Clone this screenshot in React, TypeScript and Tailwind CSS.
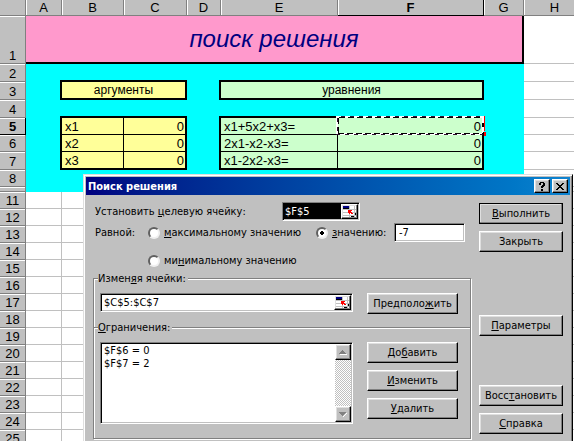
import type { ReactNode } from "react";

const uiFont = "font-['DejaVu_Sans_Condensed','DejaVu_Sans',sans-serif]";
const sheetFont = "font-['Liberation_Sans',Arial,sans-serif]";

const raised =
  "border border-t-white border-l-white border-r-black border-b-black bg-[#c0c0c0] shadow-[inset_-1px_-1px_0_#808080,inset_1px_1px_0_#dfdfdf]";
const sunken =
  "border border-t-[#808080] border-l-[#808080] border-r-white border-b-white bg-white shadow-[inset_1px_1px_0_#000,inset_-1px_-1px_0_#c0c0c0]";

const columns = [
  { name: "A", width: "w-[36px]" },
  { name: "B", width: "w-[62px]" },
  { name: "C", width: "w-[63px]" },
  { name: "D", width: "w-[34px]" },
  { name: "E", width: "w-[117px]" },
  { name: "F", width: "w-[146px]" },
  { name: "G", width: "w-[40px]" },
  { name: "H", width: "w-[62px]" },
];

const emptyRows = [11, 12, 13, 14, 15, 16, 17, 18, 19, 20, 21, 22, 23, 24, 25];

const data = [
  { row: 5, height: "h-[17px]", name: "x1", value: 0, equation: "x1+5x2+x3=", result: 0 },
  { row: 6, height: "h-[17px]", name: "x2", value: 0, equation: "2x1-x2-x3=", result: 0 },
  { row: 7, height: "h-[18px]", name: "x3", value: 0, equation: "x1-2x2-x3=", result: 0 },
];

const outlineCorner = "shadow-[-2px_-2px_0_#000,0_-2px_0_#000,-2px_0_0_#000]";
const outlineTop = "shadow-[0_-2px_0_#000]";
const outlineLeft = "shadow-[-2px_0_0_#000]";

function RowHeader({ children, active = false }: { children?: ReactNode; active?: boolean }) {
  return (
    <th
      scope="row"
      className={`border-r border-b bg-[#c0c0c0] p-0 text-center align-bottom shadow-[inset_0_1px_0_#fff] ${
        active ? "border-black font-bold" : "border-[#808080] font-normal"
      }`}
    >
      {children}
    </th>
  );
}

function Cyan({ span = 1 }: { span?: number }) {
  return <td colSpan={span} className="bg-[#00ffff] p-0" />;
}

function Blank() {
  return <td className="border-r border-b border-[#c0c0c0] bg-white p-0" />;
}

function MarchingAnts() {
  return (
    <svg
      className="pointer-events-none absolute -top-[2px] -left-[2px] h-[20px] w-[150px]"
      viewBox="0 0 150 20"
      shapeRendering="crispEdges"
      aria-hidden="true"
    >
      <path d="M0 1H148M0 18H148M1 0V19M147 0V19" fill="none" stroke="#fff" strokeWidth="2" />
      <path
        d="M3 1.5H147M2 17.5H147M2.5 2V18"
        fill="none"
        stroke="#000"
        strokeWidth="1"
        strokeDasharray="6 3"
      />
      <path d="M5 0.5H147M0 18.5H147M1.5 2V18" fill="none" stroke="#301030" strokeWidth="1" strokeDasharray="4 5" />
      <path d="M146.5 7V11M147.5 16V19" stroke="#000" strokeWidth="2" />
      <path d="M148.5 0V15M148 17.5H150" stroke="#f00" strokeWidth="1" />
      <path d="M148.5 16V20" stroke="#f00" strokeWidth="2" />
    </svg>
  );
}

function Sheet() {
  return (
    <table
      className={`w-[586px] table-fixed border-separate border-spacing-0 text-[13px] leading-[15px] text-black ${sheetFont}`}
    >
      <colgroup>
        <col className="w-[26px]" />
        {columns.map((c) => (
          <col key={c.name} className={c.width} />
        ))}
      </colgroup>
      <thead>
        <tr className="h-[16px]">
          <td className="border-r border-b border-[#808080] bg-[#c0c0c0] p-0" />
          {columns.map((c) => (
            <th
              key={c.name}
              scope="col"
              className={`border-r border-b bg-[#c0c0c0] p-0 text-center shadow-[inset_1px_0_0_#fff] ${
                c.name === "F" ? "border-black font-bold" : "border-[#808080] font-normal"
              }`}
            >
              {c.name}
            </th>
          ))}
        </tr>
      </thead>
      <tbody>
        <tr className="h-[48px]">
          <RowHeader>1</RowHeader>
          <td
            colSpan={7}
            className="border-r-2 border-b-2 border-black bg-[#ff99cc] p-0 text-center align-middle text-[24px] leading-[28px] text-[#000080] italic"
          >
            поиск решения
          </td>
          <Blank />
        </tr>
        <tr className="h-[18px]">
          <RowHeader>2</RowHeader>
          <Cyan span={7} />
          <Blank />
        </tr>
        <tr className="h-[18px]">
          <RowHeader>3</RowHeader>
          <Cyan />
          <td
            colSpan={2}
            className={`border-r-2 border-b-2 border-black bg-[#ffff99] p-0 text-center text-[12px] ${outlineCorner}`}
          >
            аргументы
          </td>
          <Cyan />
          <td
            colSpan={2}
            className={`border-r-2 border-b-2 border-black bg-[#ccffcc] p-0 text-center text-[12px] ${outlineCorner}`}
          >
            уравнения
          </td>
          <Cyan />
          <Blank />
        </tr>
        <tr className="h-[18px]">
          <RowHeader>4</RowHeader>
          <Cyan span={7} />
          <Blank />
        </tr>
        {data.map((d) => {
          const first = d.row === 5;
          const bottom = d.row === 7 ? "border-b-2" : "border-b";
          return (
            <tr key={d.row} className={d.height}>
              <RowHeader active={first}>{d.row}</RowHeader>
              <Cyan />
              <td className={`border-r border-black bg-[#ffff99] p-0 pl-[3px] ${bottom} ${first ? outlineCorner : outlineLeft}`}>
                {d.name}
              </td>
              <td className={`border-r-2 border-black bg-[#ffff99] p-0 pr-px text-right ${bottom} ${first ? outlineTop : ""}`}>
                {d.value}
              </td>
              <Cyan />
              <td className={`border-r border-black bg-[#ccffcc] p-0 pl-[3px] ${bottom} ${first ? outlineCorner : outlineLeft}`}>
                {d.equation}
              </td>
              <td className={`relative border-r-2 border-black bg-[#ccffcc] p-0 pr-px text-right ${bottom} ${first ? "z-10" : ""}`}>
                {d.result}
                {first && <MarchingAnts />}
              </td>
              <Cyan />
              <Blank />
            </tr>
          );
        })}
        <tr className="h-[17px]">
          <RowHeader>8</RowHeader>
          <Cyan span={7} />
          <Blank />
        </tr>
        <tr className="h-[5px]">
          <RowHeader />
          <Cyan span={7} />
          <Blank />
        </tr>
        {emptyRows.map((n) => (
          <tr key={n} className="h-[17px]">
            <RowHeader>{n}</RowHeader>
            {columns.map((c) => (
              <Blank key={c.name} />
            ))}
          </tr>
        ))}
      </tbody>
    </table>
  );
}

function PushButton({ children, primary = false }: { children: ReactNode; primary?: boolean }) {
  return (
    <button
      type="button"
      className={`h-[21px] w-full text-center leading-[17px] whitespace-nowrap ${raised} ${
        primary ? "outline outline-1 -outline-offset-1 outline-black" : ""
      }`}
    >
      {children}
    </button>
  );
}

function RefButton({ label }: { label: string }) {
  return (
    <button type="button" aria-label={label} className={`h-[15px] w-[17px] shrink-0 ${raised}`}>
      <svg viewBox="0 0 15 13" className="block h-[13px] w-[15px]" shapeRendering="crispEdges" aria-hidden="true">
        <path d="M1 1H14V12H1Z" fill="#fff" />
        <path d="M1 4.5H14M1 7.5H14M1 10.5H14M7.5 1V12M12.5 1V12" stroke="#c0c0c0" />
        <path d="M1 1H7V3H1Z" fill="#000080" />
        <path d="M1 3.5H7" stroke="#000" />
        <path d="M6 5H10V6H9V7H10V8H11V9H9V8H8V9H7V8H6Z" fill="#f00" />
        <path d="M9 11.5H12M13.5 8V10" stroke="#000" />
      </svg>
    </button>
  );
}

const radio =
  "size-[12px] shrink-0 appearance-none rounded-full border-2 border-t-[#606060] border-l-[#606060] border-r-[#f0f0f0] border-b-[#f0f0f0] bg-white checked:bg-[radial-gradient(circle,#000_2px,#fff_2px)]";

const group =
  "border border-[#808080] px-[6px] shadow-[1px_1px_0_#fff,inset_1px_1px_0_#fff]";

function SolverDialog() {
  return (
    <div
      role="dialog"
      aria-labelledby="solver-title"
      className={`absolute top-[174px] right-px left-[83px] border border-t-[#dfdfdf] border-r-black border-b-black border-l-[#dfdfdf] bg-[#c0c0c0] p-[2px] text-[11px] leading-[13px] text-black shadow-[inset_1px_1px_0_#fff,inset_-1px_-1px_0_#808080] ${uiFont}`}
    >
      <div className="flex h-[18px] items-center gap-[2px] bg-linear-to-r from-[#000080] to-[#1084d0] px-[2px]">
        <h2 id="solver-title" className="flex-1 font-bold text-white">
          Поиск решения
        </h2>
        <button type="button" aria-label="Справка" className={`flex h-[14px] w-[16px] items-center justify-center ${raised}`}>
          <svg viewBox="0 0 6 9" className="h-[9px] w-[6px]" shapeRendering="crispEdges" aria-hidden="true">
            <path d="M1 0H5V1H6V4H5V5H4V6H2V4H3V3H4V1H2V3H0V1H1ZM2 7H4V9H2Z" fill="#000" />
          </svg>
        </button>
        <button type="button" aria-label="Закрыть" className={`flex h-[14px] w-[16px] items-center justify-center ${raised}`}>
          <svg viewBox="0 0 8 7" className="h-[7px] w-[8px]" shapeRendering="crispEdges" aria-hidden="true">
            <path
              d="M0 0H2V1H3V2H5V1H6V0H8V1H7V2H6V3H5V4H6V5H7V6H8V7H6V6H5V5H3V6H2V7H0V6H1V5H2V4H3V3H2V2H1V1H0Z"
              fill="#000"
            />
          </svg>
        </button>
      </div>

      <div className="flex gap-[8px] px-[7px] pt-[7px]">
        <div className="min-w-0 flex-1">
          <div className="flex h-[19px] items-center pl-[2px]">
            <label htmlFor="target" className="w-[187px]">
              Установить <u>ц</u>елевую ячейку:
            </label>
            <div className={`flex h-[19px] w-[78px] p-px ${sunken}`}>
              <input id="target" defaultValue="$F$5" className="min-w-0 flex-1 bg-black pl-px text-white outline-none" />
              <RefButton label="Выбрать целевую ячейку" />
            </div>
          </div>

          <div role="radiogroup" aria-label="Равной" className="grid grid-cols-[53px_168px_1fr] pt-[2px] pl-[2px]">
            <span className="flex h-[19px] items-center">Равной:</span>
            <label className="flex h-[19px] items-center gap-[4px] whitespace-nowrap">
              <input type="radio" name="goal" className={radio} />
              <span>
                <u>м</u>аксимальному значению
              </span>
            </label>
            <div className="flex h-[19px] items-center">
              <label className="flex w-[78px] items-center gap-[4px]">
                <input type="radio" name="goal" defaultChecked className={radio} />
                <span>
                  <u>з</u>начению:
                </span>
              </label>
              <input aria-label="значение" defaultValue="-7" className={`h-[19px] w-[71px] pl-[4px] outline-none ${sunken}`} />
            </div>
            <label className="col-start-2 flex h-[37px] items-center gap-[4px] whitespace-nowrap">
              <input type="radio" name="goal" className={radio} />
              <span>
                ми<u>н</u>имальному значению
              </span>
            </label>
          </div>

          <fieldset className={`-mt-[7px] h-[56px] ${group}`}>
            <legend className="-ml-[2px] bg-[#c0c0c0] pr-[2px]">
              Измен<u>я</u>я ячейки:
            </legend>
            <div className="flex gap-[14px] pt-[8px] pr-[6px]">
              <div className={`flex h-[19px] min-w-0 flex-1 p-px ${sunken}`}>
                <input aria-label="Изменяя ячейки" defaultValue="$C$5:$C$7" className="min-w-0 flex-1 pl-[2px] outline-none" />
                <RefButton label="Выбрать изменяемые ячейки" />
              </div>
              <div className="w-[91px]">
                <PushButton>
                  Предполо<u>ж</u>ить
                </PushButton>
              </div>
            </div>
          </fieldset>

          <fieldset className={`-mt-[7px] h-[118px] ${group}`}>
            <legend className="-ml-[2px] bg-[#c0c0c0] pr-[2px]">
              <u>О</u>граничения:
            </legend>
            <div className="flex gap-[14px] pt-[8px] pr-[6px]">
              <div className={`flex h-[82px] min-w-0 flex-1 p-px ${sunken}`}>
                <select size={5} aria-label="Ограничения" className="min-w-0 flex-1 appearance-none overflow-hidden outline-none">
                  <option className="h-[13px] min-h-0 p-0 pl-[2px] leading-[13px]">$F$6 = 0</option>
                  <option className="h-[13px] min-h-0 p-0 pl-[2px] leading-[13px]">$F$7 = 2</option>
                </select>
                <div className="flex w-[16px] flex-col justify-between bg-[repeating-conic-gradient(#c0c0c0_0_25%,#fff_0_50%)] bg-[length:2px_2px]">
                  <button type="button" aria-label="Вверх" disabled className={`flex h-[16px] items-center justify-center ${raised}`}>
                    <svg viewBox="0 0 8 5" className="h-[5px] w-[8px]" shapeRendering="crispEdges" aria-hidden="true">
                      <path d="M1 4H8V5H1Z" fill="#fff" />
                      <path d="M3 0H4V1H5V2H6V3H7V4H0V3H1V2H2V1H3Z" fill="#808080" />
                    </svg>
                  </button>
                  <button type="button" aria-label="Вниз" disabled className={`flex h-[16px] items-center justify-center ${raised}`}>
                    <svg viewBox="0 0 8 5" className="h-[5px] w-[8px]" shapeRendering="crispEdges" aria-hidden="true">
                      <path d="M7 1H8V2H7V3H6V4H5V5H4V4Z" fill="#fff" />
                      <path d="M0 0H7V1H6V2H5V3H4V4H3V3H2V2H1V1H0Z" fill="#808080" />
                    </svg>
                  </button>
                </div>
              </div>
              <div className="flex w-[91px] flex-col gap-[7px]">
                <PushButton>
                  До<u>б</u>авить
                </PushButton>
                <PushButton>
                  <u>И</u>зменить
                </PushButton>
                <PushButton>
                  <u>У</u>далить
                </PushButton>
              </div>
            </div>
          </fieldset>
        </div>

        <div className="flex w-[84px] flex-col gap-[7px] pt-px">
          <PushButton primary>
            <u>В</u>ыполнить
          </PushButton>
          <PushButton>Закрыть</PushButton>
          <div className="pt-[56px] pb-[42px]">
            <PushButton>
              <u>П</u>араметры
            </PushButton>
          </div>
          <PushButton>
            Восс<u>т</u>ановить
          </PushButton>
          <PushButton>
            <u>С</u>правка
          </PushButton>
        </div>
      </div>
      <div className="h-[16px]" />
    </div>
  );
}

export default function App() {
  return (
    <main className="relative h-screen overflow-hidden bg-white">
      <Sheet />
      <SolverDialog />
    </main>
  );
}
